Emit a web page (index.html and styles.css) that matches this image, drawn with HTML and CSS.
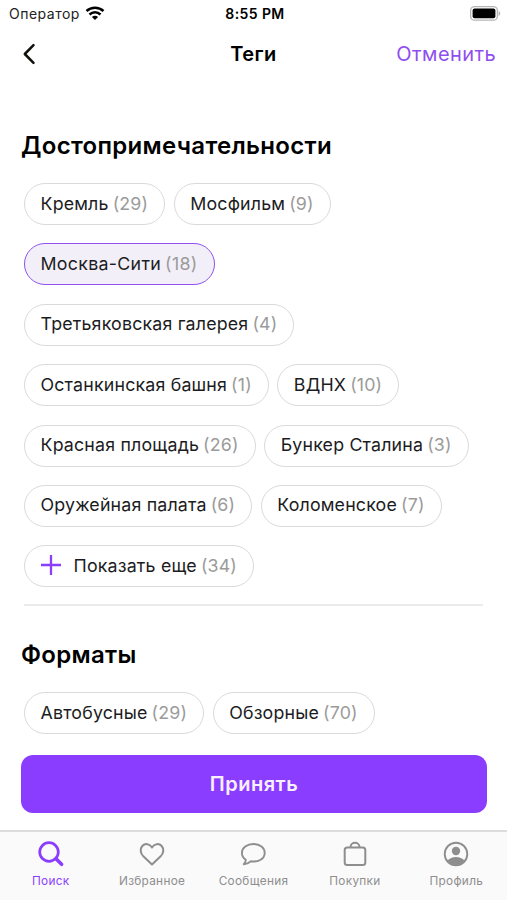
FILE: index.html
```
<!DOCTYPE html>
<html lang="ru">

<head>
    <meta charset="UTF-8">
    <meta name="viewport" content="width=device-width, initial-scale=1.0">
    <title>Теги</title>
    <link rel="stylesheet" href="styles.css">
</head>

<body>
    <div class="screen">
        <div class="status-bar">
            <div class="carrier">
                <span>Оператор</span>
                <svg width="20" height="16" viewBox="0 0 20 16" fill="none" stroke="#000" stroke-width="2.5">
                    <path d="M1.500 6c4.800-4.500 12.200-4.500 17 0" />
                    <path d="M4.500 9.500c3.100-2.900 7.900-2.900 11 0" />
                    <path d="M6.900 12c1.800-1.600 4.400-1.600 6.200 0L10 15z" fill="#000" stroke="none" />
                </svg>
            </div>
            <div class="time">8:55 PM</div>
            <div class="battery">
                <svg width="31" height="15" viewBox="0 0 31 15">
                    <rect x=".6" y=".6" width="26.8" height="13.6" rx="4" fill="#fff" stroke="#b5b5b5" stroke-width="1.3" />
                    <rect x="2.6" y="2.6" width="22.8" height="9.6" rx="2" fill="#000" />
                    <path d="M28.6 5c2.2.7 2.2 4.3 0 5z" fill="#b5b5b5" />
                </svg>
            </div>
        </div>

        <header class="header">
            <a class="back" href="#">
                <svg width="14" height="22" viewBox="0 0 14 22" fill="none" stroke="#11110a" stroke-width="2.5" stroke-linecap="round" stroke-linejoin="round">
                    <path d="M11.500 2.200L2.800 11l8.700 8.800" />
                </svg>
            </a>
            <h1 class="title">Теги</h1>
            <a class="cancel" href="#">Отменить</a>
        </header>

        <main class="content">
            <section class="tags">
                <h2>Достопримечательности</h2>
                <div class="chips">
                    <div class="chip">Кремль <span>(29)</span></div>
                    <div class="chip">Мосфильм <span>(9)</span></div>
                    <div class="chip active">Москва-Сити <span>(18)</span></div>
                    <div class="chip">Третьяковская галерея <span>(4)</span></div>
                    <div class="chip">Останкинская башня <span>(1)</span></div>
                    <div class="chip">ВДНХ <span>(10)</span></div>
                    <div class="chip">Красная площадь <span>(26)</span></div>
                    <div class="chip">Бункер Сталина <span>(3)</span></div>
                    <div class="chip">Оружейная палата <span>(6)</span></div>
                    <div class="chip">Коломенское <span>(7)</span></div>
                    <div class="chip more">
                        <svg width="20" height="20" viewBox="0 0 20 20" stroke="#8a3ffc" stroke-width="2.3">
                            <path d="M0 10h20M10 0v20" />
                        </svg>
                        Показать еще <span>(34)</span>
                    </div>
                </div>
            </section>

            <section class="tags">
                <h2>Форматы</h2>
                <div class="chips">
                    <div class="chip">Автобусные <span>(29)</span></div>
                    <div class="chip">Обзорные <span>(70)</span></div>
                </div>
            </section>
        </main>

        <button class="accept">Принять</button>

        <nav class="tabs">
            <a class="tab current" href="#">
                <svg viewBox="0 0 28 28" fill="none" stroke="currentColor">
                    <circle cx="12" cy="12" r="9.300" stroke-width="2.700" />
                    <path d="M19 18.800l5.600 5.500" stroke-width="3.600" stroke-linecap="round" />
                </svg>
                <span>Поиск</span>
            </a>
            <a class="tab" href="#">
                <svg viewBox="0 0 28 28" fill="none" stroke="currentColor" stroke-width="2" stroke-linejoin="round">
                    <path d="M14 24.400L5.600 16.600C2.200 13.200 1.800 8.800 4.300 6 7 3.100 11.700 3.500 14 7.400c2.300-3.900 7-4.300 9.700-1.400 2.500 2.800 2.100 7.200-1.300 10.600z" />
                </svg>
                <span>Избранное</span>
            </a>
            <a class="tab" href="#">
                <svg viewBox="0 0 28 28" fill="none" stroke="currentColor" stroke-width="1.9" stroke-linejoin="round">
                    <path d="M14.500 4C8 4 2.900 7.800 2.900 12.900c0 2.800 1.500 5.200 3.900 6.800-.1 1.700-.8 3.200-2 4.500 2.900-.2 5.200-1.200 6.900-2.900 7.900 1.300 14-2.600 14-8.400C25.700 7.800 21 4 14.500 4z" />
                </svg>
                <span>Сообщения</span>
            </a>
            <a class="tab" href="#">
                <svg viewBox="0 0 28 28" fill="none" stroke="currentColor" stroke-width="2">
                    <rect x="3.700" y="7.400" width="20.600" height="17.600" rx="2.500" />
                    <path d="M9.500 7.200c0-5.800 9-5.800 9 0" />
                </svg>
                <span>Покупки</span>
            </a>
            <a class="tab" href="#">
                <svg viewBox="0 0 28 28" fill="none" stroke="currentColor">
                    <circle cx="14" cy="14" r="11.300" stroke-width="1.900" />
                    <circle cx="14" cy="11" r="4.200" fill="currentColor" stroke="none" />
                    <path d="M5.500 20.500c4-4.700 13-4.700 17 0-4 6-13 6-17 0z" fill="currentColor" stroke="none" />
                </svg>
                <span>Профиль</span>
            </a>
        </nav>
    </div>
</body>

</html>
```
FILE: styles.css
```
* {
    box-sizing: border-box;
}

body {
    margin: 0;
    background: #fff;
    font-family: Inter, Roboto, sans-serif;
    color: #1c1c1e;
}

a {
    color: inherit;
    text-decoration: none;
}

svg {
    display: block;
    flex-shrink: 0;
}

.screen {
    display: grid;
    grid-template-rows: 27px 54px 674px 75px 70px;
    height: 900px;
    overflow: hidden;
}

/* status bar */
.status-bar {
    display: grid;
    grid-template-columns: 1fr auto 1fr;
    align-items: center;
    padding: 0 6px 0 9px;
    font-size: 14px;
    color: #000;
}

.carrier {
    display: flex;
    align-items: center;
    gap: 5px;
    letter-spacing: 0.500px;
    color: #222;
}

.carrier svg {
    margin-top: -2px;
}

.time {
    font-weight: 600;
    letter-spacing: 0.4px;
}

.battery {
    display: flex;
    justify-content: flex-end;
}

/* header */
.header {
    display: grid;
    grid-template-columns: 1fr auto 1fr;
    align-items: center;
    padding: 0 11px;
}

.back {
    padding-left: 11px;
}

.title {
    margin: 0;
    font-size: 20px;
    font-weight: 600;
    letter-spacing: 0.4px;
    color: #000;
}

.cancel {
    text-align: right;
    font-size: 20px;
    letter-spacing: 0.4px;
    color: #8f4ff0;
}

/* tags */
.content {
    padding: 49px 24px 0 21px;
    overflow: hidden;
}

.tags h2 {
    margin: 0;
    font-size: 24px;
    line-height: 32px;
    font-weight: 600;
    letter-spacing: 0.3px;
    color: #000;
}

.chips {
    display: flex;
    flex-wrap: wrap;
    gap: 18.400px 8.500px;
    margin-left: 3px;
    padding-top: 21px;
}

.tags:first-child .chips {
    padding-bottom: 17px;
    border-bottom: 2px solid #ebebeb;
}

.tags + .tags {
    padding-top: 33px;
}

.chip {
    display: flex;
    align-items: center;
    height: 42px;
    padding: 0 16px 2px 15.500px;
    border: 1px solid #dadada;
    border-radius: 21px;
    font-size: 17.800px;
    letter-spacing: 0.18px;
    white-space: nowrap;
}

.chip span {
    margin-left: 4px;
    color: #9b9b9b;
}

.chip.active {
    background: #f2eff8;
    border-color: #9152ee;
    letter-spacing: 0.300px;
}

.more svg {
    margin-right: 13px;
}

/* bottom */
.accept {
    height: 58px;
    margin: 0 20px 0 21px;
    border: 0;
    border-radius: 12px;
    background: #8b3dff;
    font-family: inherit;
    font-size: 20px;
    font-weight: 600;
    letter-spacing: 0.5px;
    color: #f8efff;
}

.tabs {
    display: grid;
    grid-template-columns: repeat(5, 1fr);
    border-top: 2px solid #dcdcdc;
    background: #fafafa;
}

.tab {
    display: flex;
    flex-direction: column;
    align-items: center;
    padding-top: 7.500px;
    font-size: 11.800px;
    letter-spacing: 0.3px;
    color: #8e8e8e;
}

.tab svg {
    width: 28px;
    height: 28px;
}

.tab span {
    margin-top: 6.500px;
    line-height: 15px;
}

.current {
    color: #8b3dff;
}
```
